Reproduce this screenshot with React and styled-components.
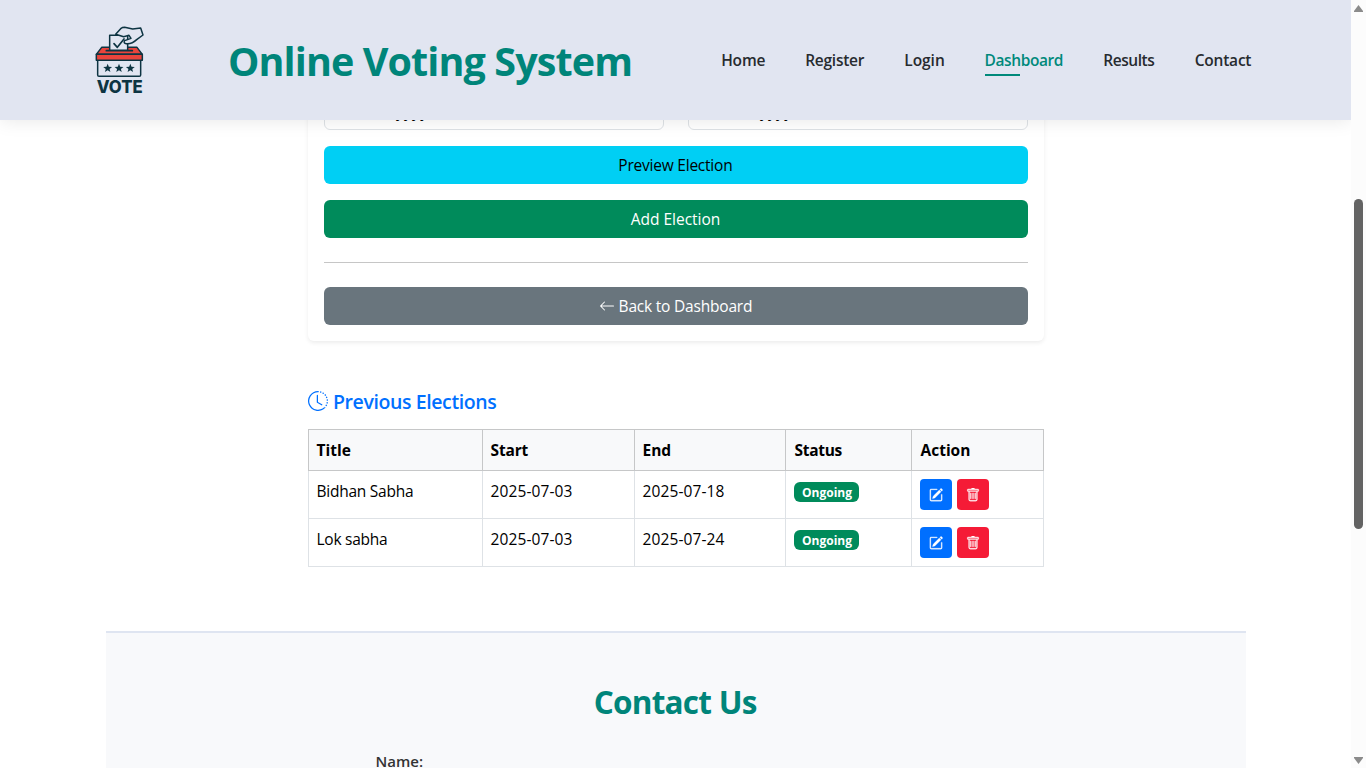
import React from "react";
import styled, { createGlobalStyle, css } from "styled-components";
import { BsArrowLeft, BsClockHistory, BsPencilSquare, BsTrash } from "react-icons/bs";

const Global = createGlobalStyle`
  *, *::before, *::after { box-sizing: border-box; }
  html, body { margin: 0; height: 768px; overflow: hidden; background: #fff; }
  body { font-family: "Open Sans", "Noto Sans", sans-serif; font-size: 15.5px; line-height: 24px; color: #000; }
`;

const tracked = css`
  letter-spacing: ${(p) => p.$track || 0}px;
  margin-right: ${(p) => -(p.$track || 0)}px;
`;

const Label = styled.span`
  white-space: nowrap;
  ${tracked}
`;

const Screen = styled.div`
  display: flex;
  width: 1366px;
  height: 768px;
  overflow: hidden;
`;

const Page = styled.div`
  position: relative;
  width: 1351px;
  height: 768px;
  overflow: hidden;
`;

const Header = styled.header`
  position: absolute;
  inset: 0 0 auto 0;
  z-index: 5;
  display: flex;
  align-items: center;
  height: 120px;
  padding: 0 99.5px 0 80px;
  background: #e1e5f1;
  box-shadow: 0 0 18px rgba(0, 0, 0, 0.1);
`;

const Logo = styled.svg`
  flex: none;
  width: 80px;
  height: 90px;
`;

const SiteTitle = styled.h1`
  margin: 2px 0 0 68px;
  font-size: 39.5px;
  line-height: 48px;
  font-weight: 700;
  color: #00857a;
  white-space: nowrap;
`;

const Nav = styled.nav`
  display: flex;
  gap: 39.8px;
  margin-left: auto;
`;

const NavLink = styled.a`
  padding: 5px 0;
  font-size: 15.5px;
  font-weight: 600;
  color: ${(p) => (p.$active ? "#00897b" : "#272b2f")};
  white-space: nowrap;
  &::after {
    content: "";
    display: block;
    width: 35px;
    height: 2px;
    margin: 2px 0 -4px;
    background: ${(p) => (p.$active ? "#00897b" : "transparent")};
  }
`;

const Main = styled.main`
  display: flex;
  flex-direction: column;
  align-items: center;
  padding-top: 76px;
`;

const Card = styled.section`
  display: flex;
  flex-direction: column;
  gap: 16px;
  width: 736px;
  height: 265px;
  padding: 16px;
  border-radius: 6px;
  box-shadow: 0 2px 4px rgba(0, 0, 0, 0.075);
`;

const DateRow = styled.div`
  display: grid;
  grid-template-columns: 1fr 1fr;
  gap: 24px;
`;

const DateField = styled.div`
  height: 38px;
  padding: 6px 12px;
  border: 1px solid #dee2e6;
  border-radius: 6px;
`;

const Button = styled.button`
  display: flex;
  align-items: center;
  justify-content: center;
  gap: 4px;
  flex: none;
  height: 38px;
  border: 0;
  border-radius: 6px;
  font: inherit;
  color: ${(p) => p.$color || "#fff"};
  background: ${(p) => p.$bg};
`;

const Divider = styled.hr`
  width: 100%;
  height: 1px;
  flex: none;
  margin: 8px 0;
  border: 0;
  background: #c6c6c6;
`;

const Previous = styled.section`
  width: 736px;
  margin-top: 49px;
`;

const SectionTitle = styled.h5`
  display: flex;
  align-items: center;
  gap: 5.5px;
  height: 24px;
  margin: 0 0 15px;
  font-size: 19.5px;
  font-weight: 600;
  color: #0070ff;
  svg {
    margin-bottom: 2px;
  }
`;

const Table = styled.table`
  width: 735px;
  table-layout: fixed;
  border-collapse: collapse;
`;

const Th = styled.th`
  width: ${(p) => p.$w}px;
  height: 41px;
  padding: 0 8px 0 ${(p) => p.$inset || 8}px;
  border: 1px solid #c6c7c8;
  background: #f8f9fa;
  font-weight: 700;
  text-align: left;
`;

const Td = styled.td`
  height: 48px;
  padding: 8px;
  border: 1px solid #dee2e6;
  vertical-align: top;
  line-height: 24px;
`;

const Badge = styled.span`
  display: flex;
  align-items: center;
  justify-content: center;
  width: 65px;
  height: 20px;
  margin-top: 3px;
  padding: 2px 0 0 2px;
  border-radius: 6px;
  font-size: 12px;
  line-height: 12px;
  font-weight: 700;
  color: #fff;
  background: #008b5b;
`;

const Actions = styled.div`
  display: flex;
  gap: 5px;
`;

const IconButton = styled.button`
  display: grid;
  place-items: center;
  width: 32px;
  height: 31px;
  padding: ${(p) => (p.$danger ? "0" : "0 0 0 1px")};
  border: 0;
  border-radius: 4px;
  font-size: 14px;
  color: #fff;
  background: ${(p) => (p.$danger ? "#f51b36" : "#006fff")};
  svg {
    stroke: currentColor;
    stroke-width: 0.35px;
  }
`;

const Contact = styled.section`
  width: 1140px;
  height: 200px;
  margin-top: 64px;
  padding: 45px 270px 0;
  border-top: 2px solid #dfe5f1;
  background: #f8f9fb;
`;

const ContactTitle = styled.h2`
  margin: 0 0 23px;
  font-size: 31.5px;
  line-height: 48px;
  font-weight: 700;
  text-align: center;
  color: #00857a;
`;

const FieldLabel = styled.label`
  display: block;
  font-size: 15px;
  font-weight: 600;
  color: #333;
`;

const Scrollbar = styled.div`
  display: flex;
  flex-direction: column;
  align-items: center;
  width: 15px;
  height: 768px;
  padding: 5px 0 4px;
  background: #fcfcfc;
`;

const Thumb = styled.div`
  width: 9px;
  height: 330px;
  margin-top: 187px;
  margin-bottom: auto;
  border-radius: 5px;
  background: #636363;
`;

const star = (cx) => {
  const pts = [];
  for (let i = 0; i < 10; i++) {
    const r = i % 2 ? 6 : 14;
    const a = (Math.PI / 5) * i - Math.PI / 2;
    pts.push(`${cx + r * Math.cos(a)},${160 + r * Math.sin(a)}`);
  }
  return pts.join(" ");
};

function VoteLogo() {
  return (
    <Logo viewBox="0 0 240 270" fill="none" stroke="#0d3442" strokeWidth="4.5" strokeLinejoin="round" strokeLinecap="round">
      <path d="M53 136V180Q53 184 57 184H178Q182 184 182 180V136" />
      <path d="M65 97H171L187 118H49Z" fill="#e9443c" />
      <path d="M49 118H187V136H49Z" fill="#e9443c" />
      <path d="M79 107H157" strokeWidth="5" />
      <path d="M89 106V61H143V106Z" fill="#e1e5f1" />
      <path d="M107 58L122 41Q127 37 134 37L158 42L182 39L189 60L171 73Q155 88 139 86Q129 84 134 77L153 70L147 61L131 65Z" fill="#e1e5f1" />
      <path d="M102 86L112 97L132 72" strokeWidth="5" />
      {[83, 117, 151].map((x) => (
        <polygon key={x} points={star(x)} fill="#0d3442" stroke="none" />
      ))}
      <text x="50" y="233" textLength="138" lengthAdjust="spacingAndGlyphs" fontFamily="Inter, sans-serif" fontSize="51" fontWeight="800" fill="#0d3442" stroke="none">
        VOTE
      </text>
    </Logo>
  );
}

const NAV = [["Home", -0.2], ["Register", -0.25], ["Login", -0.05], ["Dashboard", -0.4], ["Results", -0.45], ["Contact", -0.2]];
const COLUMNS = [["Title", 174, 8, 0], ["Start", 152, 8, -0.15], ["End", 151, 8, 0], ["Status", 126, 9, -0.3], ["Action", 132, 9, 0]];
const ROWS = [
  ["Bidhan Sabha", "2025-07-03", "2025-07-18"],
  ["Lok sabha", "2025-07-03", "2025-07-24"],
];

export default function App() {
  return (
    <>
      <Global />
      <Screen>
        <Page>
          <Header>
            <VoteLogo />
            <SiteTitle><Label $track={-0.9}>Online Voting System</Label></SiteTitle>
            <Nav>
              {NAV.map(([name, t]) => (
                <NavLink key={name} $active={name === "Dashboard"}><Label $track={t}>{name}</Label></NavLink>
              ))}
            </Nav>
          </Header>
          <Main>
            <Card>
              <DateRow>
                <DateField><Label $track={0.3}>dd-mm-yyyy</Label></DateField>
                <DateField><Label $track={0.3}>dd-mm-yyyy</Label></DateField>
              </DateRow>
              <Button $bg="#00cff4" $color="#000"><Label $track={-0.22}>Preview Election</Label></Button>
              <Button $bg="#008b5b"><Label>Add Election</Label></Button>
              <Divider />
              <Button $bg="#69757d"><BsArrowLeft size={16} /><Label $track={-0.2}>Back to Dashboard</Label></Button>
            </Card>
            <Previous>
              <SectionTitle><BsClockHistory size={20} /><Label $track={-0.4}>Previous Elections</Label></SectionTitle>
              <Table>
                <thead>
                  <tr>{COLUMNS.map(([c, w, inset, t]) => <Th key={c} $w={w} $inset={inset}><Label $track={t}>{c}</Label></Th>)}</tr>
                </thead>
                <tbody>
                  {ROWS.map((row) => (
                    <tr key={row[0]}>
                      {row.map((v, i) => <Td key={v}><Label $track={i ? 0.11 : -0.25}>{v}</Label></Td>)}
                      <Td><Badge><Label>Ongoing</Label></Badge></Td>
                      <Td>
                        <Actions>
                          <IconButton aria-label="Edit"><BsPencilSquare /></IconButton>
                          <IconButton aria-label="Delete" $danger><BsTrash /></IconButton>
                        </Actions>
                      </Td>
                    </tr>
                  ))}
                </tbody>
              </Table>
            </Previous>
            <Contact>
              <ContactTitle><Label $track={-0.75}>Contact Us</Label></ContactTitle>
              <FieldLabel><Label>Name:</Label></FieldLabel>
            </Contact>
          </Main>
        </Page>
        <Scrollbar>
          <svg width="9" height="7" viewBox="0 0 9 7"><path d="M4.5 0L9 6V7H0V6Z" fill="#8b8b8b" /></svg>
          <Thumb />
          <svg width="9" height="7" viewBox="0 0 9 7"><path d="M4.5 7L9 1V0H0V1Z" fill="#8b8b8b" /></svg>
        </Scrollbar>
      </Screen>
    </>
  );
}
